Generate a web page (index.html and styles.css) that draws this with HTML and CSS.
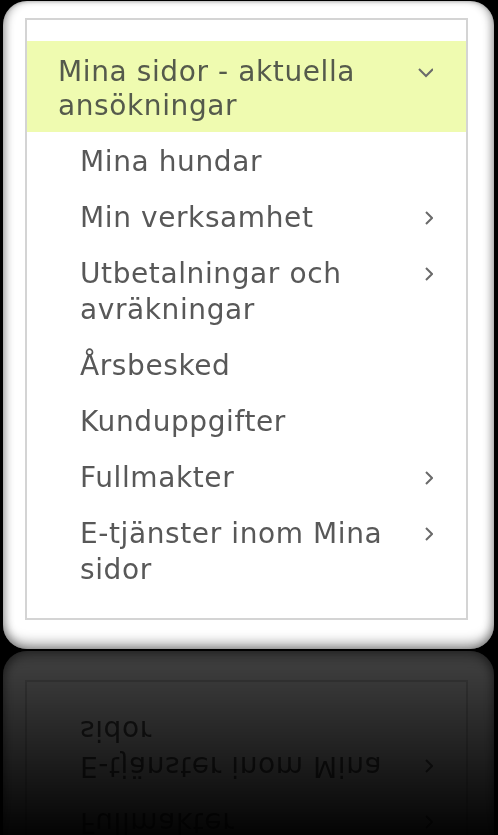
FILE: index.html
```html
<!DOCTYPE html>
<html lang="sv">
<head>
  <meta charset="UTF-8">
  <meta name="viewport" content="width=device-width, initial-scale=1.0">
  <title>Mina sidor</title>
  <link rel="stylesheet" href="styles.css">
</head>
<body>

  <div class="kort">
    <nav class="meny">
      <div class="rubrik">
        <span class="text">Mina sidor - aktuella ansökningar</span>
        <svg class="pil" width="16" height="34" viewBox="0 0 16 34"><path d="M2 14 L9 21 L16 14" /></svg>
      </div>
      <ul class="lista">
        <li><span class="text">Mina hundar</span></li>
        <li><span class="text">Min verksamhet</span>
          <svg class="pil" width="16" height="36" viewBox="0 0 16 36"><path d="M9 12 L15 18 L9 24" /></svg></li>
        <li><span class="text">Utbetalningar och avräkningar</span>
          <svg class="pil" width="16" height="36" viewBox="0 0 16 36"><path d="M9 12 L15 18 L9 24" /></svg></li>
        <li><span class="text">Årsbesked</span></li>
        <li><span class="text">Kunduppgifter</span></li>
        <li><span class="text">Fullmakter</span>
          <svg class="pil" width="16" height="36" viewBox="0 0 16 36"><path d="M9 12 L15 18 L9 24" /></svg></li>
        <li><span class="text">E-tjänster inom Mina sidor</span>
          <svg class="pil" width="16" height="36" viewBox="0 0 16 36"><path d="M9 12 L15 18 L9 24" /></svg></li>
      </ul>
    </nav>
  </div>

</body>
</html>
```

FILE: styles.css
```css
body {
  margin: 0;
  background-color: #000000;
  font-family: "DejaVu Sans", Verdana, sans-serif;
  color: #585858;
  height: 835px;
  overflow: hidden;
}

/* Det vita kortet med skugga och spegling */
.kort {
  margin: 1px 0 0 3px;
  width: 491px;
  height: 648px;
  box-sizing: border-box;
  padding: 17px 26px 29px 22px;
  background-color: #ffffff;
  border-radius: 24px;
  box-shadow:
    inset 6px 0 8px -3px rgba(0, 0, 0, 0.3),
    inset -6px 0 8px -3px rgba(0, 0, 0, 0.3),
    inset 0 -10px 12px -4px rgba(0, 0, 0, 0.35),
    inset 0 2px 3px -1px rgba(0, 0, 0, 0.15);
  -webkit-box-reflect: below 2px linear-gradient(to bottom, transparent 70%, rgba(0, 0, 0, 0.26) 100%);
}

.meny {
  height: 100%;
  box-sizing: border-box;
  border: 2px solid #d4d4d4;
  padding: 21px 0 22px 0;
  font-size: 28px;
  letter-spacing: 0.6px;
}

.rubrik {
  display: flex;
  align-items: flex-start;
  justify-content: space-between;
  background-color: #effbb0;
  padding: 14px 33px 9px 31px;
  line-height: 34px;
  color: #555a4c;
}

.rubrik .text {
  width: 330px;
}

.lista {
  list-style: none;
  margin: 0;
  padding: 0;
}

.lista li {
  display: flex;
  align-items: flex-start;
  justify-content: space-between;
  padding: 12px 33px 8px 53px;
  line-height: 36px;
}

.lista .text {
  width: 330px;
}

.pil {
  flex: none;
}

.pil path {
  fill: none;
  stroke: #6a6a6a;
  stroke-width: 2;
}
```
